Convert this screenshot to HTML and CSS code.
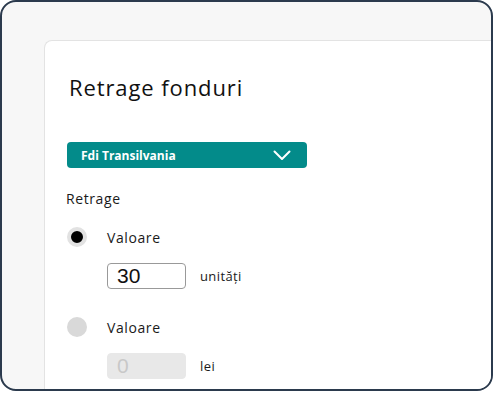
FILE: index.html
```html
<!DOCTYPE html>
<html lang="ro">
<head>
    <meta charset="UTF-8">
    <meta name="viewport" content="width=device-width, initial-scale=1.0">
    <title>Retrage fonduri</title>
    <link rel="stylesheet" href="styles.css">
</head>
<body>

<div class="frame">
    <div class="card">
        <h1>Retrage fonduri</h1>

        <div class="select">
            <span>Fdi Transilvania</span>
            <svg class="chevron" width="18" height="11" viewBox="0 0 18 11">
                <path d="M1.5 1.5 L9 9 L16.5 1.5" fill="none" stroke="#fff" stroke-width="2" stroke-linecap="round" stroke-linejoin="round"/>
            </svg>
        </div>

        <div class="section-label">Retrage</div>

        <div class="option">
            <span class="radio checked"></span>
            <span class="option-label">Valoare</span>
        </div>
        <div class="amount">
            <input type="text" class="amount-input" value="30">
            <span class="unit">unități</span>
        </div>

        <div class="option">
            <span class="radio"></span>
            <span class="option-label">Valoare</span>
        </div>
        <div class="amount">
            <input type="text" class="amount-input" value="0" disabled>
            <span class="unit">lei</span>
        </div>
    </div>
</div>

</body>
</html>
```

FILE: styles.css
```css
html, body {
    margin: 0;
    padding: 0;
    background-color: #fff;
    font-family: "Open Sans", Arial, sans-serif;
    color: #1a1a1a;
}
.frame {
    box-sizing: border-box;
    width: 493px;
    height: 391px;
    border: 2px solid #2b3a4d;
    border-radius: 16px;
    background-color: #f7f7f7;
    padding: 38px 0 0 42px;
    overflow: hidden;
}
.card {
    box-sizing: border-box;
    height: 100%;
    background-color: #fff;
    border: 1px solid #e3e3e3;
    border-right: none;
    border-bottom: none;
    border-radius: 8px 0 0 0;
    padding: 32px 0 0 21px;
}
h1 {
    margin: 0 0 0 3px;
    font-size: 22px;
    font-weight: 400;
    line-height: 28px;
    letter-spacing: 0.9px;
    color: #111;
}
.select {
    width: 240px;
    height: 26px;
    margin: 41px 0 0 1px;
    box-sizing: border-box;
    padding: 0 14px;
    background-color: #038b8a;
    border-radius: 4px;
    display: flex;
    align-items: center;
    justify-content: space-between;
    color: #fff;
    font-size: 12px;
    font-weight: 700;
}
.chevron {
    margin-right: 2px;
}
.section-label {
    margin-top: 22px;
    font-size: 14px;
    line-height: 18px;
    letter-spacing: 0.6px;
}
.option {
    display: flex;
    align-items: center;
    margin-top: 18px;
    height: 22px;
}
.amount + .option {
    margin-top: 27px;
}
.radio {
    box-sizing: border-box;
    width: 20px;
    height: 20px;
    margin-left: 1px;
    border-radius: 50%;
    background-color: #d9d9d9;
}
.radio.checked {
    background-color: #000;
    border: 4px solid #e2e2e2;
}
.option-label {
    margin-left: 20px;
    font-size: 14px;
    letter-spacing: 0.6px;
}
.amount {
    display: flex;
    align-items: center;
    margin: 15px 0 0 41px;
}
.amount-input {
    box-sizing: border-box;
    width: 79px;
    height: 26px;
    padding: 0 9px;
    border: 1px solid #999;
    border-radius: 4px;
    font-family: "Liberation Sans", Arial, sans-serif;
    font-size: 21px;
    color: #111;
    background-color: #fff;
}
.amount-input:disabled {
    border-color: #e8e8e8;
    background-color: #e8e8e8;
    color: #c8c8c8;
}
.unit {
    margin-left: 14px;
    font-size: 13px;
    letter-spacing: 0.4px;
}
```
